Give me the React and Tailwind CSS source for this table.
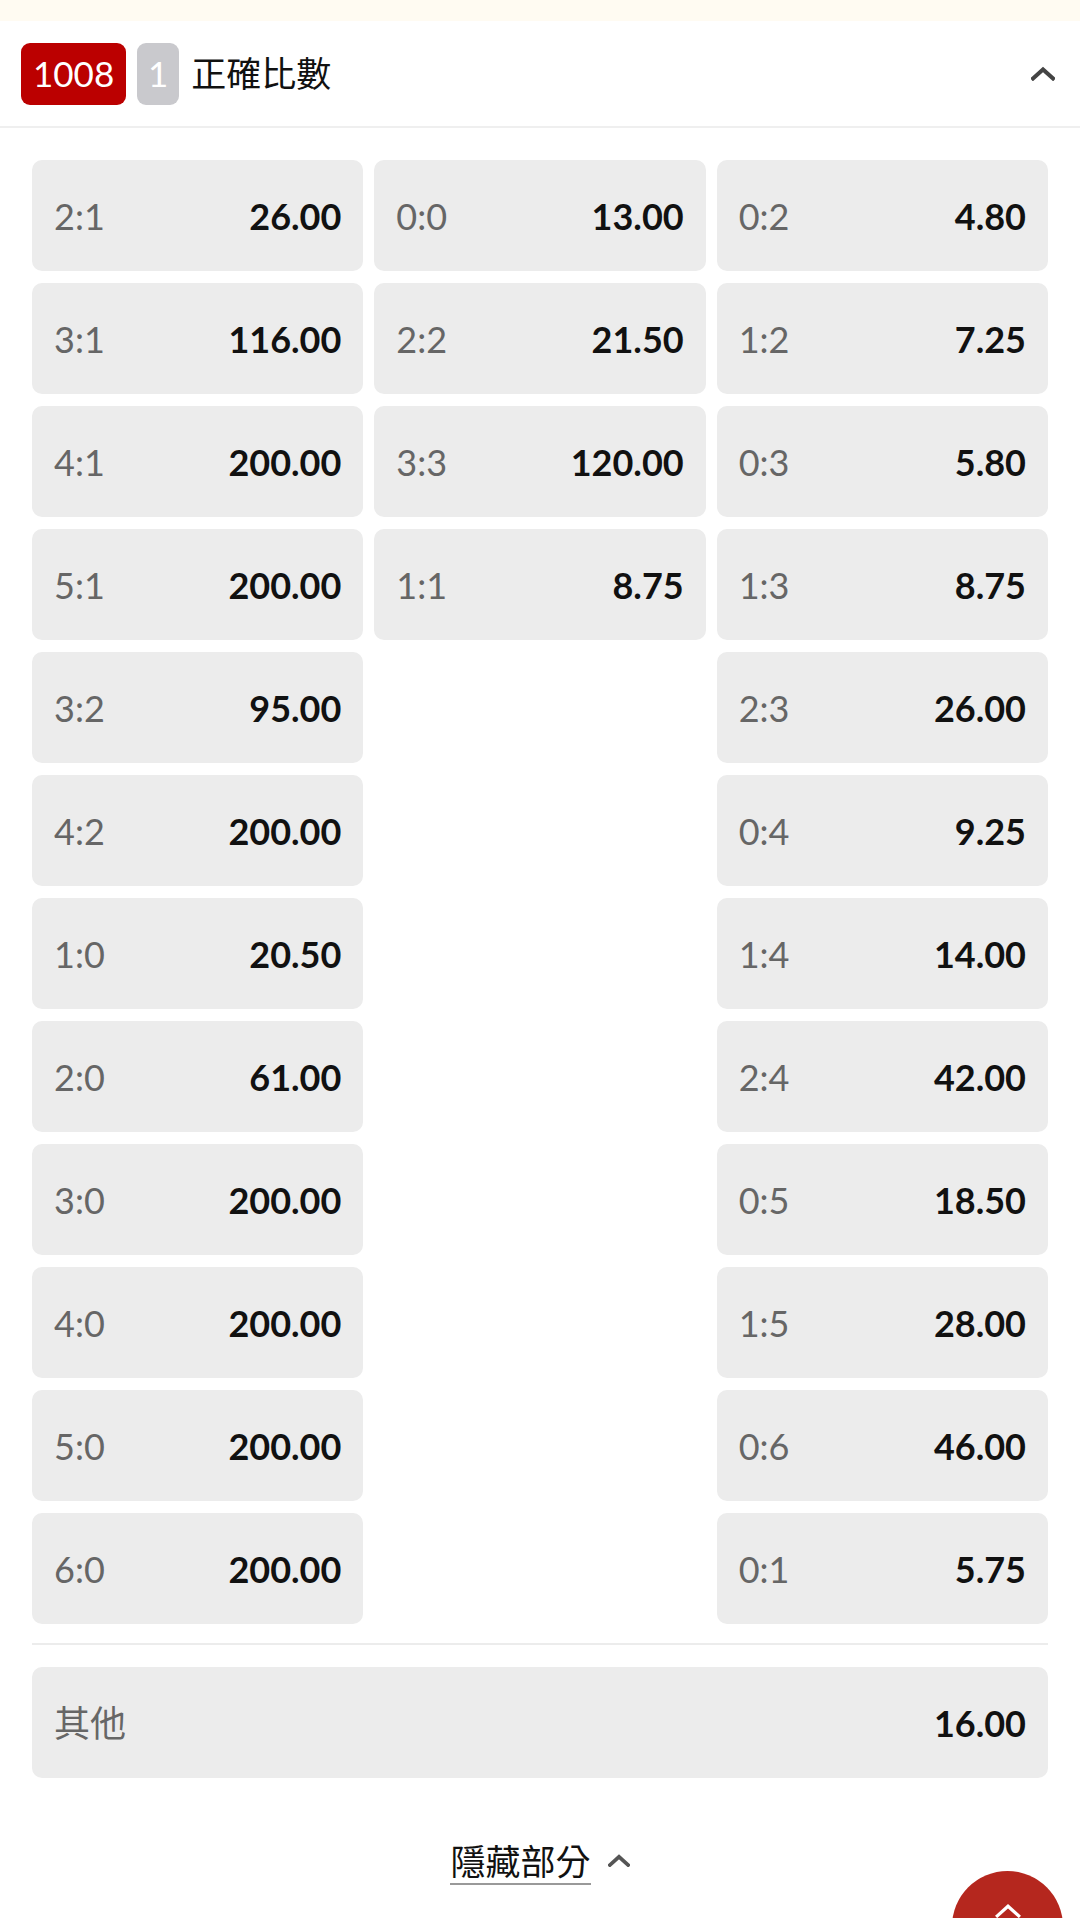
import React from "react";

const left = [
  ["2:1", "26.00"],
  ["3:1", "116.00"],
  ["4:1", "200.00"],
  ["5:1", "200.00"],
  ["3:2", "95.00"],
  ["4:2", "200.00"],
  ["1:0", "20.50"],
  ["2:0", "61.00"],
  ["3:0", "200.00"],
  ["4:0", "200.00"],
  ["5:0", "200.00"],
  ["6:0", "200.00"],
];

const middle = [
  ["0:0", "13.00"],
  ["2:2", "21.50"],
  ["3:3", "120.00"],
  ["1:1", "8.75"],
];

const right = [
  ["0:2", "4.80"],
  ["1:2", "7.25"],
  ["0:3", "5.80"],
  ["1:3", "8.75"],
  ["2:3", "26.00"],
  ["0:4", "9.25"],
  ["1:4", "14.00"],
  ["2:4", "42.00"],
  ["0:5", "18.50"],
  ["1:5", "28.00"],
  ["0:6", "46.00"],
  ["0:1", "5.75"],
];

const Chevron = ({ className, stroke = "#444", width = 4 }) => (
  <svg viewBox="0 0 24 14" className={className} fill="none">
    <polyline
      points="2,12 12,3 22,12"
      stroke={stroke}
      strokeWidth={width}
      strokeLinecap="square"
    />
  </svg>
);

const OddCell = ({ label, price }) => (
  <div className="h-[111px] rounded-[10px] bg-[#ececec] px-[22px] flex items-center justify-between">
    <span className="text-[36px] text-[#666666] leading-none">{label}</span>
    <span className="text-[36px] font-bold text-[#111111] leading-none">{price}</span>
  </div>
);

const Column = ({ items }) => (
  <div className="flex-1 flex flex-col gap-3">
    {items.map(([label, price]) => (
      <OddCell key={label} label={label} price={price} />
    ))}
  </div>
);

export default function App() {
  return (
    <div
      className="relative w-full min-h-screen bg-white"
      style={{ fontFamily: "Lato, 'Noto Sans CJK TC', sans-serif" }}
    >
      {/* strip left over from the card above */}
      <div className="h-[21px] bg-[#fffbf2]" />

      {/* market header */}
      <div className="h-[107px] flex items-center px-[21px] border-b-2 border-[#efefef]">
        <div className="h-[62px] px-[12px] rounded-[9px] bg-[#bb0000] text-white text-[35px] leading-none flex items-center">
          1008
        </div>
        <div className="ml-[11px] h-[62px] w-[42px] rounded-[9px] bg-[#c9c9cd] text-white text-[35px] leading-none flex items-center justify-center">
          1
        </div>
        <div className="ml-[12px] text-[35px] text-[#111111] leading-none">正確比數</div>
        <Chevron className="ml-auto mr-[4px] w-[24px] h-[15px]" />
      </div>

      {/* score grid */}
      <div className="px-[32px] pt-[32px]">
        <div className="flex gap-[11px] items-start">
          <Column items={left} />
          <Column items={middle} />
          <Column items={right} />
        </div>

        <div className="mt-[19px] h-[2px] bg-[#ececec]" />

        <div className="mt-[22px]">
          <OddCell label="其他" price="16.00" />
        </div>
      </div>

      {/* hide section */}
      <div className="mt-[63px] flex justify-center items-center">
        <div className="flex items-center">
          <span className="text-[35px] leading-[40px] text-[#111111] pb-[2px] border-b-2 border-[#999999]">
            隱藏部分
          </span>
          <Chevron className="ml-[17px] -mt-[6px] w-[22px] h-[13px]" stroke="#555" />
        </div>
      </div>

      {/* back to top */}
      <div className="fixed right-[17px] bottom-[-64px] w-[111px] h-[111px] rounded-full bg-[#b5271e] flex justify-center pt-[32px]">
        <Chevron className="w-[26px] h-[15px]" stroke="#ffffff" width={3} />
      </div>
    </div>
  );
}
